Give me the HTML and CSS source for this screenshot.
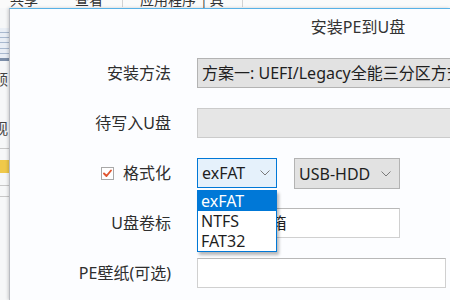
FILE: index.html
```html
<!DOCTYPE html>
<html lang="zh-CN">
<head>
<meta charset="utf-8">
<title>安装PE到U盘</title>
<link rel="stylesheet" href="styles.css">
</head>
<body>
<div class="desk">
  <div class="tabbar">
    <div class="tabrow">
      <span class="tab t-share">共享</span>
      <span class="tab t-view">查看</span>
      <span class="vsep s1"></span>
      <span class="tab t-app">应用程序</span>
      <span class="tab t-bar">|</span>
      <span class="tab t-tool">具</span>
      <span class="vsep s2"></span>
    </div>
  </div>
  <div class="side">
    <div class="side-icon"><i></i><i></i><i></i><i></i><i></i></div>
    <div class="side-base"></div>
    <div class="side-text t-a">颉</div>
    <div class="side-text t-b">观</div>
    <div class="side-line l-a"></div>
    <div class="side-yellow"></div>
    <div class="side-line l-b"></div>
    <div class="side-line l-c"></div>
  </div>
</div>

<div class="dialog">
  <div class="title">安装PE到U盘</div>
  <div class="form">
    <div class="label">安装方法</div>
    <div class="field combo wide">方案一: UEFI/Legacy全能三分区方式</div>

    <div class="label">待写入U盘</div>
    <div class="field disabled wide"></div>

    <div class="label check-label">
      <span class="checkbox">
        <svg width="13" height="13" viewBox="0 0 13 13"><path d="M3 6.5 L5.5 9 L10 3.5" fill="none" stroke="#e0552f" stroke-width="1.9" stroke-linecap="round" stroke-linejoin="round"/></svg>
      </span>
      <span>格式化</span>
    </div>
    <div class="combo-row">
      <div class="combo-wrap">
        <div class="field combo active fs">
          <span>exFAT</span>
          <svg class="chev" width="10" height="6" viewBox="0 0 10 6"><path d="M0.5 0.5 L5 5 L9.5 0.5" fill="none" stroke="#7a7a7a" stroke-width="1"/></svg>
        </div>
        <ul class="dropdown">
          <li class="sel">exFAT</li>
          <li>NTFS</li>
          <li>FAT32</li>
        </ul>
      </div>
      <div class="field combo mode">
        <span>USB-HDD</span>
        <svg class="chev" width="10" height="6" viewBox="0 0 10 6"><path d="M0.5 0.5 L5 5 L9.5 0.5" fill="none" stroke="#7a7a7a" stroke-width="1"/></svg>
      </div>
    </div>

    <div class="label">U盘卷标</div>
    <div class="field input vol">微PE工具箱</div>

    <div class="label">PE壁纸(可选)</div>
    <div class="field input wall"></div>
  </div>
</div>
</body>
</html>
```

FILE: styles.css
```css
html, body {
  margin: 0;
  padding: 0;
  width: 450px;
  height: 300px;
  overflow: hidden;
}
body {
  position: relative;
  background: #f6f7f8;
  font-family: "Noto Sans", "Noto Sans CJK SC", sans-serif;
  color: #2b2b2b;
}

/* background window */
.desk {
  display: flex;
  flex-direction: column;
  height: 300px;
  overflow: hidden;
}
.tabbar {
  height: 8px;
  overflow: hidden;
  background: #fafafa;
}
.tabrow {
  display: flex;
  align-items: center;
  height: 16px;
  margin-top: -9px;
  font-family: "Noto Sans CJK SC", sans-serif;
  font-size: 14px;
  line-height: 16px;
  color: #333;
}
.tab { white-space: nowrap; }
.t-share { margin-left: 10px; }
.t-view { margin-left: 37px; }
.vsep { width: 1px; height: 16px; background: #d2d2d2; }
.s1 { margin-left: 19px; }
.t-app { margin-left: 17px; }
.t-bar { margin-left: 6px; }
.t-tool { margin-left: 4px; }
.s2 { margin-left: 18px; }

.side {
  width: 10px;
  display: flex;
  flex-direction: column;
  overflow: hidden;
}
.side-icon {
  margin-top: 20px;
  height: 30px;
  display: flex;
  flex-direction: column;
  justify-content: space-around;
  background: #e9eef5;
  padding: 2px 0;
  box-sizing: border-box;
}
.side-icon i {
  display: block;
  height: 1px;
  background: #a9b9cf;
}
.side-base {
  height: 3px;
  background: #7d8fa9;
}
.side-text {
  font-family: "Noto Sans CJK SC", sans-serif;
  font-size: 15px;
  line-height: 16px;
  margin-left: -7px;
  color: #444;
}
.t-a { margin-top: 10px; }
.t-b { margin-top: 33px; }
.side-line { height: 1px; background: #c8c8c8; }
.l-a { margin-top: 12px; }
.side-yellow { margin-top: 11px; height: 13px; background: #f0c94a; }
.l-b { margin-top: 12px; }
.l-c { margin-top: 10px; }

/* dialog */
.dialog {
  position: absolute;
  left: 9px;
  top: 8px;
  right: 0;
  bottom: 0;
  overflow: hidden;
  background: #fcfdff;
  border-top: 1px solid #58b1e6;
  border-left: 1px solid #b9bcc2;
  box-shadow: -1px 0 3px rgba(0, 0, 0, 0.18);
}
.title {
  text-align: center;
  padding-top: 8px;
  padding-left: 256px;
  height: 20px;
  line-height: 20px;
  font-size: 16px;
  color: #333;
  margin-bottom: 21px;
}
.form {
  display: grid;
  grid-template-columns: 161px 1fr;
  grid-auto-rows: 30px;
  column-gap: 26px;
  row-gap: 20px;
  font-size: 16px;
}
.label {
  justify-self: end;
  align-self: center;
  white-space: nowrap;
  line-height: 20px;
  color: #2e2e2e;
}
.check-label {
  display: flex;
  align-items: center;
  gap: 9px;
}
.checkbox {
  display: block;
  width: 13px;
  height: 13px;
  box-sizing: border-box;
  border: 1px solid #a8a8a8;
  background: #fff;
}
.checkbox svg {
  display: block;
  margin: -1px;
}

.field {
  box-sizing: border-box;
  height: 30px;
  line-height: 28px;
  white-space: nowrap;
  overflow: hidden;
  color: #1e1e1e;
}
.wide { width: 300px; }
.combo {
  background: #e2e2e2;
  border: 1px solid #b3b3b3;
  padding-left: 4px;
}
.disabled {
  background: #e6e6e6;
  border: 1px solid #cbcbcb;
}
.combo-row {
  display: flex;
  gap: 17px;
  align-items: start;
}
.combo-wrap {
  position: relative;
}
.fs, .mode {
  display: flex;
  align-items: center;
  justify-content: space-between;
  padding-right: 6px;
}
.fs { width: 80px; }
.mode { width: 106px; padding-right: 8px; height: 31px; }
.active {
  background: #e5f1fb;
  border-color: #0078d7;
}
.chev { display: block; flex: none; }

.dropdown {
  position: absolute;
  left: 0;
  top: 32px;
  width: 80px;
  margin: 0;
  padding: 0;
  list-style: none;
  box-sizing: border-box;
  border: 1px solid #0078d7;
  background: #fff;
  box-shadow: 2px 3px 3px rgba(0, 0, 0, 0.28);
  z-index: 2;
}
.dropdown li {
  height: 20px;
  line-height: 20px;
  padding-left: 3px;
  color: #1e1e1e;
}
.dropdown li.sel {
  background: #0078d7;
  color: #fff;
}

.input {
  background: #fff;
  border: 1px solid #d0d0d0;
  border-top-color: #b8b8b8;
  padding-left: 6px;
}
.vol { width: 203px; }
.wall { width: 249px; }
```
